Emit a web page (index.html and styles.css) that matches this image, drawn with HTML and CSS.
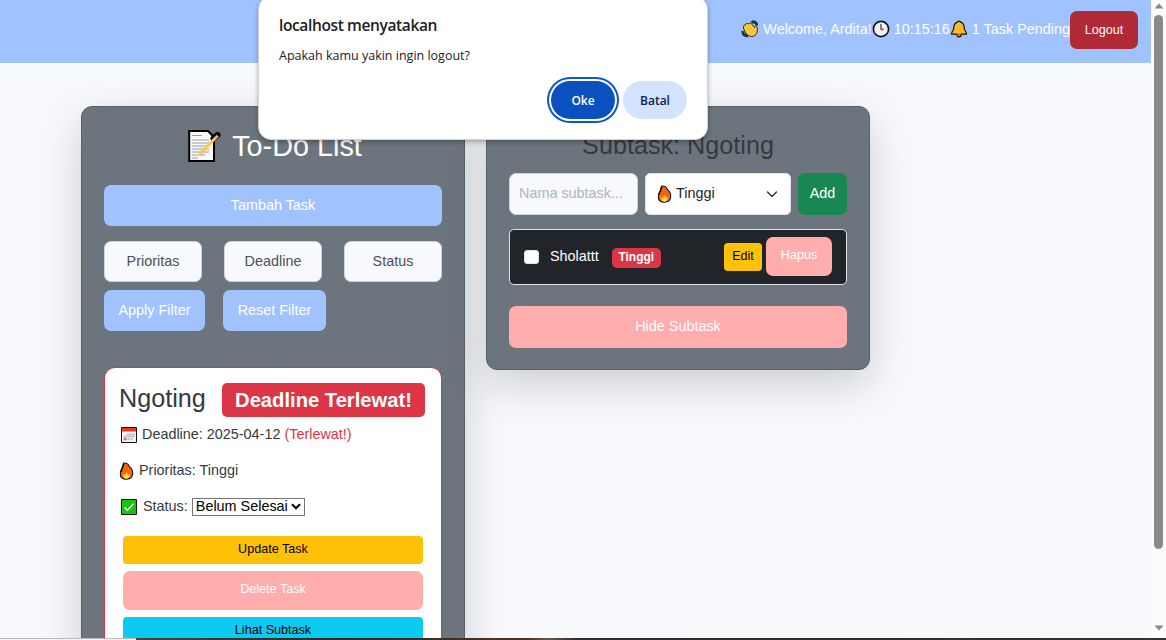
FILE: index.html
```html
<!DOCTYPE html>
<html lang="id">
<head>
<meta charset="utf-8">
<title>To-Do List</title>
<link rel="stylesheet" href="styles.css">
</head>
<body>
<svg class="defs" width="0" height="0" aria-hidden="true">
  <symbol id="fire" viewBox="0 0 14 18">
    <path d="M4.200 1C6.800 .8 9 2.200 9.600 4.200C12 6.200 13.300 8.800 13.200 11.600C13 15.300 10.500 17.300 7 17.300C3.400 17.300 .9 15.200 .8 12C.7 9.500 1.700 8 2.700 6C3.500 4.300 3.300 2.800 4.200 1Z" fill="#f7630c" stroke="#101010" stroke-width="1.100"/>
    <path d="M4.200 2C4 4.500 1.600 7 1.500 10" fill="none" stroke="#101010" stroke-width="1.500"/>
    <path d="M7 10C7.800 11 8.300 11.500 8.600 12.500L10 11.500C11 14 9.800 16.500 7 16.600C4.200 16.600 2.900 14 3.900 11.500L5.400 12.700C6 11.600 6.800 10.800 7 10Z" fill="#ffd02b"/>
    <path d="M7 13C8.200 14 8.400 16.300 7 16.500C5.500 16.300 5.800 14 7 13Z" fill="#fff4a0"/>
  </symbol>
</svg>
<div class="viewport">
  <div class="page">
    <header class="topbar">
      <span class="info">
        <svg class="emoji wave" viewBox="0 0 18 18"><path d="M10.500 2.500C13 1 16 2.500 15.800 5.500M2 11C1.500 14 3.500 16 7 15.800" fill="none" stroke="#123b4a" stroke-width="3"/><path d="M2.500 8C2 6 3 5 4.200 5.300C4.300 3.300 6 3 7.200 4C8.500 2.600 10 3 11 4.300L13.500 7.500C13.600 5.600 15.900 5.600 16.200 7.800C16.800 11.500 15.500 16.500 10.500 16.500C7 16.500 4 13 2.500 8Z" fill="#ffc83d" stroke="#151515" stroke-width=".9"/><path d="M5.500 7L8.500 10.500M8 6L11 9.500" stroke="#e09a18" stroke-width=".6"/></svg><span>Welcome, Ardita!</span>
      </span>
      <span class="info">
        <svg class="emoji" viewBox="0 0 18 18"><circle cx="9" cy="9" r="7.600" fill="#f5f5f5" stroke="#151515" stroke-width="1.600"/><circle cx="9" cy="9" r="5.800" fill="none" stroke="#999" stroke-width=".8" stroke-dasharray=".6 2.440"/><path d="M9 4V9" stroke="#333" stroke-width="1.200"/><path d="M8.500 9.400H11.500" stroke="#e12b3d" stroke-width="1.800"/></svg><span>10:15:16</span>
      </span>
      <span class="info">
        <svg class="emoji bell" viewBox="0 0 18 18"><path d="M7.400 2.200C7.400 .8 10.600 .8 10.600 2.200C13.500 3 14.200 5 14.200 8C14.200 10.500 16.500 11.500 16.500 14.200H11.200C11.200 17.800 6.800 17.800 6.800 14.200H1.500C1.500 11.500 3.800 10.500 3.800 8C3.800 5 4.500 3 7.400 2.200Z" fill="#fcb928" stroke="#151515" stroke-width="1.200"/><path d="M7.500 14.500H10.500" stroke="#c46a00" stroke-width="1.500"/></svg><span>1 Task Pending</span>
      </span>
      <button class="btn logout">Logout</button>
    </header>

    <main class="columns">
      <section class="card">
        <h2 class="title">
          <svg class="memo" viewBox="0 0 34 34"><path d="M2.200 2H21L27 8V32H2.200Z" fill="#f8f8f8" stroke="#000" stroke-width="2"/><path d="M5 6.500H15M5 11H22M5 14H22M5 17H22M5 20H22M5 23H22M5 26H18M5 29H11" stroke="#999" stroke-width="1.100"/><path d="M26.500 9.500L30.500 6" stroke="#000" stroke-width="6" stroke-linecap="round"/><path d="M12.500 25L28.500 9" stroke="#ffc83d" stroke-width="3"/><path d="M28 9.500L30.800 6.700" stroke="#f2a0a5" stroke-width="3"/><path d="M10 27.500L11.400 23.900L13.600 26.100Z" fill="#f5c7a0"/></svg><span>To-Do List</span>
        </h2>
        <button class="btn soft-blue">Tambah Task</button>
        <div class="filters">
          <div class="field">Prioritas</div>
          <div class="field">Deadline</div>
          <div class="field">Status</div>
        </div>
        <div class="filter-actions">
          <button class="btn soft-blue apply">Apply Filter</button>
          <button class="btn soft-blue reset">Reset Filter</button>
        </div>
        <article class="task">
          <div class="task-head"><h3>Ngoting</h3><span class="late-badge">Deadline Terlewat!</span></div>
          <p class="line"><svg class="ico-cal" viewBox="0 0 18 18"><path d="M1.500 1.500H16.500V16.500H1.500Z" fill="#f1f1f1" stroke="#111" stroke-width="1"/><path d="M2 2H16V5.500H2Z" fill="#e6391e"/><path d="M7 8.500H15M4 10.500H15M4 13H13" stroke="#b0b0b0" stroke-width="1.300" stroke-dasharray="1.500 .6"/><circle cx="5" cy="13" r="1.400" fill="#ee6845"/></svg><span>Deadline: 2025-04-12 <span class="danger">(Terlewat!)</span></span></p>
          <p class="line"><svg class="ico-fire"><use href="#fire"/></svg><span>Prioritas: Tinggi</span></p>
          <p class="line status"><svg class="ico-check" viewBox="0 0 18 18"><path d="M1.500 1.500H16.500V16.500H1.500Z" fill="#16c60c" stroke="#111" stroke-width="1"/><path d="M4.500 9.400L7.300 12.200L13.500 5.800" fill="none" stroke="#fff" stroke-width="1.400"/></svg><span>Status:</span><span class="native-select">Belum Selesai<svg viewBox="0 0 10 7"><path d="M1 1.300L5 5.300L9 1.300" fill="none" stroke="#000" stroke-width="2"/></svg></span></p>
          <div class="task-actions">
            <button class="btn sm yellow">Update Task</button>
            <button class="btn pink">Delete Task</button>
            <button class="btn sm cyan">Lihat Subtask</button>
          </div>
        </article>
      </section>

      <section class="card subtasks">
        <h3 class="sub-title">Subtask: Ngoting</h3>
        <div class="sub-form">
          <div class="field name-input">Nama subtask...</div>
          <div class="priority-select"><svg class="ico-fire"><use href="#fire"/></svg><span>Tinggi</span><svg class="chevron" viewBox="0 0 12 12"><path d="M1.500 4L6 8.500L10.500 4" fill="none" stroke="#343a40" stroke-width="1.500" stroke-linecap="round" stroke-linejoin="round"/></svg></div>
          <button class="btn green">Add</button>
        </div>
        <div class="sub-item">
          <span class="checkbox"></span><span class="sub-name">Sholattt</span><span class="badge">Tinggi</span>
          <button class="btn sm yellow edit">Edit</button>
          <button class="btn pink remove">Hapus</button>
        </div>
        <button class="btn pink hide">Hide Subtask</button>
      </section>
    </main>
  </div>
  <div class="scrollbar">
    <svg class="arrow" viewBox="0 0 10 6"><path d="M5 .5L9.500 5.500H.5Z" fill="#8a8a8a"/></svg>
    <div class="thumb"></div>
    <svg class="arrow down" viewBox="0 0 10 6"><path d="M.5 .5H9.500L5 5.500Z" fill="#8a8a8a"/></svg>
  </div>
</div>
<div class="edge"><span class="edge-light"></span><span class="edge-dark"></span></div>

<div class="dialog" role="alertdialog">
  <div class="dialog-title">localhost menyatakan</div>
  <div class="dialog-text">Apakah kamu yakin ingin logout?</div>
  <div class="dialog-actions"><button class="pill ok">Oke</button><button class="pill cancel">Batal</button></div>
</div>
</body>
</html>
```
FILE: styles.css
```css
* { box-sizing: border-box; }
body {
  margin: 0;
  height: 640px;
  overflow: hidden;
  font: 14.4px/21.6px "Liberation Sans", Arial, sans-serif;
  color: #343a40;
  background: #f8f9fa;
  white-space: nowrap;
}
svg { display: block; flex: none; }
.defs { position: absolute; }
h2, h3, p { margin: 0; font-weight: 400; }
.viewport { display: flex; height: 638px; overflow: hidden; }
.page { width: 1151px; background: #f8f9fc; overflow: hidden; }

.topbar {
  display: flex;
  justify-content: flex-end;
  align-items: flex-start;
  height: 63px;
  padding: 11px 13px 0 0;
  background: #a0c3ff;
  color: #fff;
}
.info { display: flex; gap: 4px; margin-top: 8px; }
.emoji { width: 18px; height: 18px; margin-top: 1px; }

.btn {
  display: flex;
  align-items: center;
  justify-content: center;
  border: 0;
  padding: 0;
  width: 100%;
  height: 41px;
  border-radius: 7px;
  font: 14.4px/21.6px "Liberation Sans", Arial, sans-serif;
  color: #fff;
}
.logout { width: 68px; height: 38px; padding-top: 1px; background: #b02a37; font-size: 12.6px; }
.soft-blue { background: #a0c3ff; }
.pink { background: #ffadad; }
.yellow { background: #ffc107; color: #000; }
.cyan { background: #0dcaf0; color: #000; }
.green { background: #198754; width: 49px; height: 42px; }
.sm { height: 28px; border-radius: 4px; font-size: 12.6px; padding-bottom: 1px; }

.columns { display: flex; align-items: flex-start; gap: 21px; padding: 43px 0 0 81px; }
.card {
  width: 384px;
  padding: 22px;
  border: 1px solid #58606a;
  border-radius: 11px;
  background: #6c757d;
  box-shadow: 0 14.4px 43.2px rgba(0, 0, 0, .175);
}
.title {
  display: flex;
  justify-content: center;
  gap: 11px;
  height: 34px;
  margin-bottom: 22px;
  padding-left: 3px;
  font-size: 28.8px;
  line-height: 34px;
  color: #fff;
}
.memo { width: 34px; height: 34px; }
.filters { display: flex; gap: 22px; margin-top: 15px; }
.field {
  flex: 1;
  height: 41px;
  border: 1px solid #ced4da;
  border-radius: 7px;
  background: #f8f9fc;
  color: #495057;
  line-height: 39px;
  text-align: center;
}
.filter-actions { display: flex; gap: 18px; margin-top: 8px; }
.apply { width: 101px; }
.reset { width: 103px; }

.task {
  margin-top: 36px;
  height: 300px;
  padding: 15px 14px 14px;
  border: 1px solid #dc3545;
  border-radius: 11px;
  background: #fff;
}
.task-head { display: flex; justify-content: space-between; padding-right: 2px; }
.task-head h3 { font-size: 25.2px; line-height: 31px; }
.late-badge {
  width: 203px;
  height: 34px;
  border-radius: 5px;
  background: #dc3545;
  color: #fff;
  font-size: 20.2px;
  font-weight: 700;
  line-height: 34px;
  text-align: center;
}
.line { display: flex; align-items: center; height: 22px; margin-top: 14px; gap: 5px; }
.task-head + .line { margin-top: 7px; }
.danger { color: #dc3545; }
.ico-cal, .ico-check { width: 18px; height: 18px; margin: -1px -1px 0 1px; }
.ico-fire { width: 15px; height: 18px; margin-top: -1px; }
.status { gap: 5px; }
.status .ico-check { margin-right: 0; }
.native-select {
  display: flex;
  align-items: center;
  justify-content: space-between;
  width: 113px;
  height: 18px;
  margin-left: -1px;
  margin-top: -1px;
  padding: 0 3px;
  border: 1px solid #767676;
  background: #fff;
  color: #000;
}
.native-select svg { width: 10px; height: 7px; }
.task-actions { display: flex; flex-direction: column; gap: 7px; width: 300px; margin: 18px 0 0 4px; }
.task-actions .btn { flex: none; }
.task-actions .pink { height: 39px; font-size: 12.6px; padding-bottom: 1px; }

.subtasks { height: 264px; }
.sub-title { height: 30px; font-size: 25.2px; line-height: 32px; text-align: center; }
.sub-form { display: flex; gap: 7px; margin-top: 14px; }
.name-input { flex: none; width: 129px; height: 42px; padding-left: 9px; text-align: left; color: #adb5bd; }
.priority-select {
  display: flex;
  align-items: center;
  gap: 4px;
  width: 146px;
  height: 42px;
  padding: 0 12px 0 11px;
  border: 1px solid #dee2e6;
  border-radius: 5px;
  background: #fff;
  color: #212529;
}
.chevron { width: 12px; height: 12px; margin-left: auto; }
.sub-item {
  display: flex;
  align-items: center;
  height: 56px;
  margin-top: 14px;
  padding: 0 14px;
  border: 1px solid #dee2e6;
  border-radius: 5px;
  background: #212529;
  color: #fff;
}
.checkbox { width: 15px; height: 14px; border: 1px solid #dee2e6; border-radius: 3px; background: #fff; }
.sub-name { margin-left: 11px; }
.badge {
  width: 49px;
  height: 20px;
  margin: 2px auto 0 13px;
  border-radius: 5px;
  background: #dc3545;
  font-size: 12px;
  font-weight: 700;
  line-height: 19px;
  text-align: center;
}
.edit { width: 38px; margin-right: 4px; }
.remove { width: 66px; height: 39px; margin-bottom: 2px; font-size: 12.6px; }
.hide { height: 42px; margin-top: 21px; }

.scrollbar {
  display: flex;
  flex-direction: column;
  align-items: center;
  width: 15px;
  padding: 3px 0 7px;
  background: #fcfcfc;
}
.arrow { width: 10px; height: 6px; }
.thumb { width: 9px; height: 534px; margin-top: 6px; border-radius: 5px; background: #8a8a8a; }
.down { margin-top: auto; }
.edge { display: flex; height: 2px; }
.edge-light { width: 136px; border-top: 1px solid #bcbcbc; background: #f4f4f4; }
.edge-dark { flex: 1; background: linear-gradient(90deg, #4a403b, #2f2724 20%, #4d3525 38%, #66534a 40%, #342b28 43%, #3c302a); }

.dialog {
  position: absolute;
  left: 258px;
  top: -4px;
  width: 450px;
  height: 144px;
  padding: 17px 21px 0;
  border: 1px solid #d0d2d3;
  border-radius: 13px;
  background: #fff;
  color: #202124;
  font-family: "Open Sans", "Noto Sans", sans-serif;
  box-shadow: 0 2px 5px rgba(0, 0, 0, .3);
}
.dialog-title { margin-left: -1px; font-size: 15.5px; font-weight: 600; line-height: 22px; letter-spacing: -.37px; }
.dialog-text { margin: 10px 0 0 -1px; font-size: 12.5px; line-height: 20px; }
.dialog-actions { display: flex; justify-content: flex-end; gap: 8px; margin: 15px -1px 0 0; }
.pill {
  width: 64px;
  height: 38px;
  padding: 1px 0 0;
  border: 0;
  border-radius: 19px;
  font: 600 12px/20px "Open Sans", "Noto Sans", sans-serif;
}
.ok { background: #0b50bf; color: #fff; box-shadow: 0 0 0 2px #fff, 0 0 0 4px #0b57d0; }
.cancel { background: #d3e3fd; color: #0a2350; }
```
